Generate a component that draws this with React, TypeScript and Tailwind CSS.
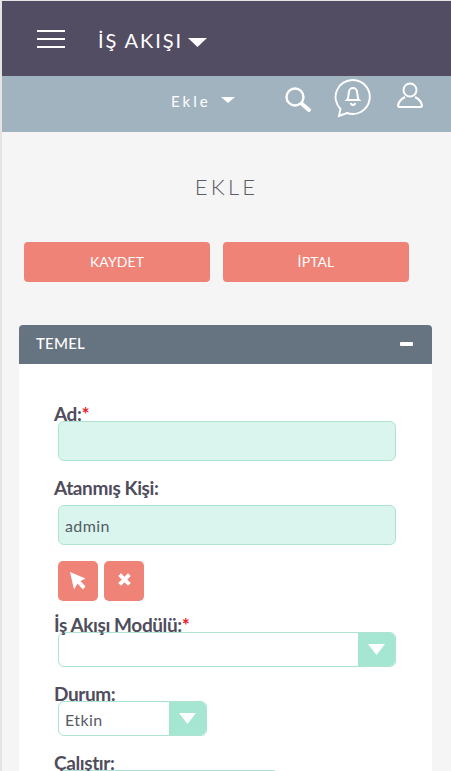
const font = { label: 'font-["Lato",sans-serif]' };

function Caret({ className }: { className: string }) {
  return (
    <svg viewBox="0 0 18 10" preserveAspectRatio="none" className={className} fill="#ffffff">
      <path d="M0 0h18L9 10z" />
    </svg>
  );
}

function FieldLabel({ text, required, className }: { text: string; required?: boolean; className: string }) {
  return (
    <div className={`pl-[35px] text-[19px] leading-[22px] font-bold tracking-[-0.4px] text-[#4f4d5c] ${className}`}>
      {text}
      {required && <span className="text-[#e8202a]">*</span>}
    </div>
  );
}

function SelectBox({ value, className }: { value?: string; className: string }) {
  return (
    <div className={`flex h-[35px] overflow-hidden rounded-[6px] border border-[#aee3d4] bg-white ${className}`}>
      <div className="flex-1 pl-[6px] text-[16px] leading-[35px] tracking-[0.4px] text-[#555b66]">{value}</div>
      <div className="flex w-[37px] items-center justify-center bg-[#a5e6d2]">
        <Caret className="h-[11px] w-[17px]" />
      </div>
    </div>
  );
}

export default function App() {
  return (
    <div className={`h-[771px] overflow-hidden border-t border-l-2 border-[#e4e4e4] bg-[#f5f5f5] ${font.label}`}>
      {/* Üst menü */}
      <header className="flex h-[75px] items-center bg-[#534d64] pl-[35px]">
        <div className="flex w-[28px] flex-col gap-[6px]">
          <span className="h-[2px] bg-white" />
          <span className="h-[2px] bg-white" />
          <span className="h-[2px] bg-white" />
        </div>
        <div className="mt-[3px] ml-[33px] text-[20px] tracking-[1.9px] text-white">İŞ AKIŞI</div>
        <Caret className="mt-[8px] ml-[5px] h-[9px] w-[19px]" />
      </header>

      <div className="relative flex h-[56px] items-center bg-[#a2b3c0] pb-[6px] pl-[169px]">
        <span className="text-[15px] tracking-[3px] text-white">Ekle</span>
        <Caret className="ml-[10px] mb-[2px] h-[6px] w-[14px]" />
        <svg viewBox="0 0 28 28" className="absolute top-[10px] left-[282px] h-[28px] w-[28px]" fill="none" stroke="#ffffff">
          <circle cx="11" cy="11" r="8.5" strokeWidth="2.4" />
          <path d="M18 18l7 6" strokeWidth="4" strokeLinecap="round" />
        </svg>
        <svg viewBox="0 0 38 40" className="absolute top-[2px] left-[332px] h-[40px] w-[38px]" fill="none" stroke="#ffffff" strokeWidth="1.9">
          <path d="M19 2a17 17 0 1 1-6 33l-8 3 1.5-7A17 17 0 0 1 19 2z" />
          <path d="M13 22c2-2 1-5 2-8a4 4 0 0 1 8 0c1 3 0 6 2 8z" strokeWidth="2" />
          <path d="M17 25a2 2 0 0 0 4 0" strokeWidth="2" />
        </svg>
        <svg viewBox="0 0 28 28" className="absolute top-[5px] left-[394px] h-[28px] w-[28px]" fill="none" stroke="#ffffff" strokeWidth="2">
          <circle cx="14" cy="9" r="6.5" />
          <path d="M2 26c0-6 5-9 7-10M26 26c0-6-5-9-7-10M2 26h24" />
        </svg>
      </div>

      {/* Sayfa başlığı */}
      <h2 className="pt-[44px] text-center text-[22px] leading-[22px] font-light tracking-[3.2px] text-[#5c5c66]">EKLE</h2>

      <div className="mt-[44px] flex gap-[13px] pl-[22px]">
        <button className="h-[40px] w-[186px] rounded-[4px] bg-[#f08377] pb-[2px] text-[14px] tracking-[0.1px] text-white">KAYDET</button>
        <button className="h-[40px] w-[186px] rounded-[4px] bg-[#f08377] pb-[2px] text-[14px] tracking-[0.1px] text-white">İPTAL</button>
      </div>

      {/* Temel paneli */}
      <section className="mt-[43px] ml-[17px] w-[413px]">
        <div className="flex h-[39px] items-center justify-between rounded-t-[4px] bg-[#667380] pr-[19px] pb-[2px] pl-[17px]">
          <span className="text-[15px] font-medium tracking-[0.2px] text-white">TEMEL</span>
          <span className="h-[4px] w-[13px] rounded-[1px] bg-white" />
        </div>
        <div className="h-[500px] bg-white">
          <FieldLabel text="Ad:" required className="pt-[39px]" />
          <div className="mt-[-4px] ml-[39px] h-[40px] w-[338px] rounded-[6px] border border-[#aee3d4] bg-[#d9f5ed]" />
          <FieldLabel text="Atanmış Kişi:" className="mt-[16px]" />
          <div className="mt-[6px] ml-[39px] h-[40px] w-[338px] rounded-[6px] border border-[#aee3d4] bg-[#d9f5ed] pl-[6px] text-[16px] leading-[40px] tracking-[0.4px] text-[#555b66]">admin</div>
          <div className="mt-[16px] ml-[39px] flex gap-[6px]">
            <button className="flex h-[40px] w-[40px] items-center justify-center rounded-[5px] bg-[#f08377]">
              <svg viewBox="0 0 16 18" className="h-[18px] w-[16px]" fill="#ffffff">
                <path d="M0 0L15.5 6.5 10.5 9 15.5 14.5 13 17.5 7.5 11.5 4 17.5z" />
              </svg>
            </button>
            <button className="flex h-[40px] w-[40px] items-center justify-center rounded-[5px] bg-[#f08377] pb-[4px]">
              <svg viewBox="0 0 12 12" className="h-[13px] w-[13px]" stroke="#ffffff" strokeWidth="3.6">
                <path d="M1.5 1.5l9 9M10.5 1.5l-9 9" />
              </svg>
            </button>
          </div>
          <FieldLabel text="İş Akışı Modülü:" required className="mt-[13px]" />
          <SelectBox className="mt-[-4px] ml-[39px] w-[338px]" />
          <FieldLabel text="Durum:" className="mt-[16px]" />
          <SelectBox value="Etkin" className="mt-[-4px] ml-[39px] w-[149px]" />
          <FieldLabel text="Çalıştır:" className="mt-[16px]" />
          <div className="mt-[-4px] ml-[39px] h-[35px] w-[221px] rounded-[6px] border border-[#aee3d4] bg-white" />
        </div>
      </section>
    </div>
  );
}
